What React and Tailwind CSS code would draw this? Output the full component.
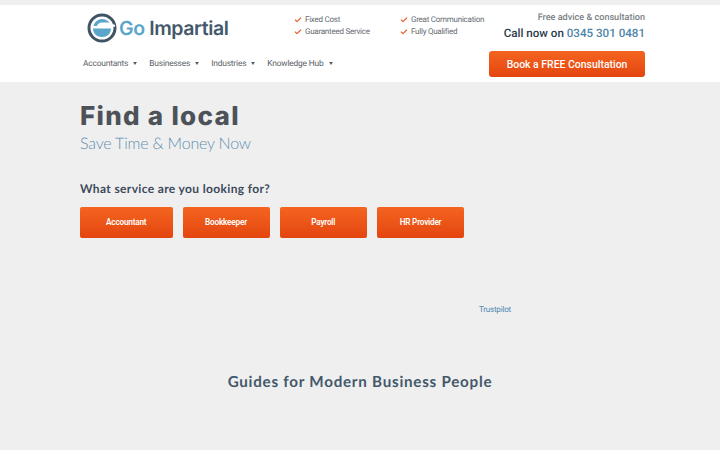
import { Check } from 'lucide-react'

const navItems = ['Accountants', 'Businesses', 'Industries', 'Knowledge Hub']
const services = [
  { label: 'Accountant', width: 'w-[92.5px]' },
  { label: 'Bookkeeper', width: 'w-[87px]' },
  { label: 'Payroll', width: 'w-[87.5px]' },
  { label: 'HR Provider', width: 'w-[87px]' },
]
const perks = [
  ['Fixed Cost', 'Guaranteed Service'],
  ['Great Communication', 'Fully Qualified'],
]

function Logo() {
  return (
    <svg width="30" height="30" viewBox="0 0 30 30" fill="none">
      <circle cx="15" cy="15" r="13" fill="#fff" stroke="#3f5566" strokeWidth="3" />
      <path d="M6 15.500h18c0 5-4 8.500-9 8.500s-9-3.500-9-8.500z" fill="#5aa6cb" />
      <path d="M6.500 13c1-4 4.500-7 8.500-7 3 0 5.500 1.200 7.500 3.500H15c-2.500 0-4.500 1.500-5 3.500z" fill="#5aa6cb" />
      <path d="M22 11l6 2" stroke="#fff" strokeWidth="2" />
    </svg>
  )
}

export default function App() {
  return (
    <div className="h-[450px] overflow-hidden bg-[#efefef] pt-[5px] font-['Roboto',sans-serif] antialiased [text-rendering:geometricPrecision]">
      <header className="h-[77px] bg-white">
        <div className="ml-[80px] flex w-[565px] flex-col">
          <div className="flex h-[46px] items-start">
            <div className="mt-[8px] ml-[7px] flex w-[207px] shrink-0 items-center gap-[2px]">
              <Logo />
              <span className="text-[19.5px] leading-[30px] font-semibold font-['Inter',sans-serif] tracking-[-0.4px] whitespace-nowrap">
                <span className="text-[#5aa6cb]">Go</span>{' '}
                <span className="text-[#43586a]">Impartial</span>
              </span>
            </div>
            <div className="mt-[9.5px] flex w-[106px] shrink-0 flex-col gap-[2.5px]">
              {perks[0].map((p) => (
                <Perk key={p} label={p} />
              ))}
            </div>
            <div className="mt-[9.5px] flex w-[102px] shrink-0 flex-col gap-[2.5px]">
              {perks[1].map((p) => (
                <Perk key={p} label={p} />
              ))}
            </div>
            <div className="mt-[7px] flex-1 text-right whitespace-nowrap">
              <p className="text-[9.1px] leading-[13px] font-medium text-[#7a7f85]">Free advice &amp; consultation</p>
              <p className="text-[11.6px] leading-[16px] font-medium text-[#2c3a4b]">
                Call now on <span className="text-[#4d86a8]">0345 301 0481</span>
              </p>
            </div>
          </div>
          <div className="flex items-center justify-between">
            <nav className="flex items-center gap-[12px] pl-[3px]">
              {navItems.map((item) => (
                <a key={item} className="flex items-center gap-[5px] text-[8.4px] tracking-[-0.18px] text-[#5a5f66] whitespace-nowrap">
                  {item}
                  <span className="h-0 w-0 border-x-[2px] border-t-[3px] border-x-transparent border-t-[#5a5f66]" />
                </a>
              ))}
            </nav>
            <button className="h-[26px] w-[156px] rounded-[3px] bg-gradient-to-b from-[#f4641f] to-[#e4450f] pt-[1px] text-[10.45px] font-medium text-white">
              Book a FREE Consultation
            </button>
          </div>
        </div>
      </header>

      <main className="pl-[80px]">
        <h1 className="mt-[17px] text-[26px] leading-[36px] font-extrabold tracking-[1.3px] text-[#4d5259] font-['Inter',sans-serif]">
          Find a local
        </h1>
        <p className="mt-[-1px] text-[16px] leading-[20px] font-light tracking-[-0.2px] text-[#5f8fb0] font-['Lato',sans-serif]">
          Save Time &amp; Money Now
        </p>
        <h2 className="mt-[26px] text-[12px] leading-[18px] font-bold tracking-[0.35px] text-[#3c4a5c] font-['Lato',sans-serif]">
          What service are you looking for?
        </h2>
        <div className="mt-[9px] flex gap-[10px]">
          {services.map((s) => (
            <button
              key={s.label}
              className={`h-[30.5px] ${s.width} rounded-[2px] bg-gradient-to-b from-[#f4641f] to-[#e4450f] text-[8.2px] tracking-[-0.2px] font-semibold text-white`}
            >
              {s.label}
            </button>
          ))}
        </div>
        <div className="mt-[66px] ml-[399px] text-[8px] tracking-[-0.2px] leading-[12px] text-[#4d86b0]">Trustpilot</div>
        <h2 className="mt-[55px] w-[560px] text-center text-[15.2px] leading-[22px] font-bold tracking-[0.75px] text-[#43586a] font-['Lato',sans-serif]">
          Guides for Modern Business People
        </h2>
      </main>
    </div>
  )
}

function Perk({ label }) {
  return (
    <div className="flex h-[10px] items-center gap-[3px] text-[8px] tracking-[-0.25px] leading-[10px] text-[#666b72] whitespace-nowrap">
      <Check size={8} strokeWidth={3.5} className="text-[#e2622a]" />
      {label}
    </div>
  )
}
